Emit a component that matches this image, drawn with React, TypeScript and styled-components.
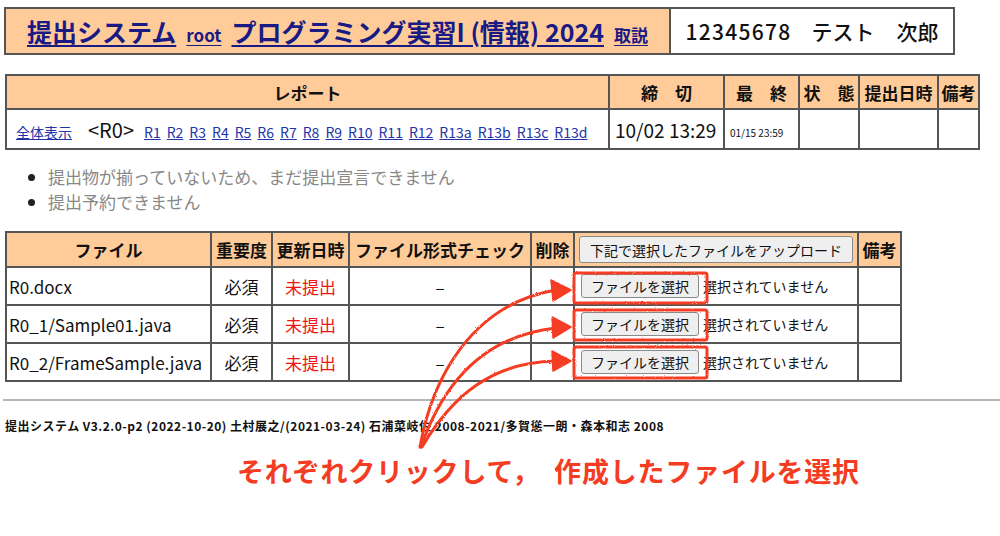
import React from 'react';
import styled, { createGlobalStyle } from 'styled-components';

const GlobalStyle = createGlobalStyle`
  html, body {
    margin: 0;
    padding: 0;
    background: #ffffff;
  }
  body {
    font-family: "Noto Sans CJK JP", "Noto Sans", sans-serif;
    color: #111;
  }
`;

const PEACH = '#ffcc99';
const LINE = '#555555';
const RED = '#f43c22';

const REPORTS = ['R1', 'R2', 'R3', 'R4', 'R5', 'R6', 'R7', 'R8', 'R9', 'R10', 'R11', 'R12', 'R13a', 'R13b', 'R13c', 'R13d'];

const FILES = [
  { name: 'R0.docx' },
  { name: 'R0_1/Sample01.java' },
  { name: 'R0_2/FrameSample.java' },
];

const App: React.FC = () => {
  return (
    <>
      <GlobalStyle />
      <Page>
        <HeaderTable>
          <tbody>
            <tr>
              <TitleCell>
                <TitleRow>
                  <BigLink href="#">提出システム</BigLink>
                  <SmallLink href="#">root</SmallLink>
                  <BigLink href="#">プログラミング実習I (情報) 2024</BigLink>
                  <SmallLink href="#">取説</SmallLink>
                </TitleRow>
              </TitleCell>
              <UserCell>
                <UserId>12345678</UserId>テスト<UserGap />次郎
              </UserCell>
            </tr>
          </tbody>
        </HeaderTable>

        <GridTable>
          <thead>
            <tr>
              <Th $w={603} $h={34}>レポート</Th>
              <Th $w={115} $h={34}>締　切</Th>
              <Th $w={75} $h={34}>最　終</Th>
              <Th $w={60} $h={34}>状　態</Th>
              <Th $w={79} $h={34}>提出日時</Th>
              <Th $w={41} $h={34}>備考</Th>
            </tr>
          </thead>
          <tbody>
            <tr>
              <Td $h={40}>
                <ReportNav>
                  <NavLink href="#">全体表示</NavLink>
                  <Current>&lt;R0&gt;</Current>
                  {REPORTS.map((r) => (
                    <NavLink key={r} href="#">{r}</NavLink>
                  ))}
                </ReportNav>
              </Td>
              <Td $h={40}><Deadline>10/02 13:29</Deadline></Td>
              <Td $h={40}><FinalDate>01/15 23:59</FinalDate></Td>
              <Td $h={40} />
              <Td $h={40} />
              <Td $h={40} />
            </tr>
          </tbody>
        </GridTable>

        <Notes>
          <li>提出物が揃っていないため、まだ提出宣言できません</li>
          <li>提出予約できません</li>
        </Notes>

        <GridTable>
          <thead>
            <tr>
              <Th $w={205} $h={35}>ファイル</Th>
              <Th $w={61} $h={35}>重要度</Th>
              <Th $w={77} $h={35}>更新日時</Th>
              <Th $w={182} $h={35}>ファイル形式チェック</Th>
              <Th $w={43} $h={35}>削除</Th>
              <Th $w={284} $h={35}>
                <UploadButton type="button">下記で選択したファイルをアップロード</UploadButton>
              </Th>
              <Th $w={43} $h={35}>備考</Th>
            </tr>
          </thead>
          <tbody>
            {FILES.map((f) => (
              <tr key={f.name}>
                <Td $h={38}>{f.name}</Td>
                <Td $h={38} $center>必須</Td>
                <Td $h={38} $center><Missing>未提出</Missing></Td>
                <Td $h={38} $center>–</Td>
                <Td $h={38} />
                <Td $h={38}>
                  <FilePicker>
                    <PickButton type="button">ファイルを選択</PickButton>
                    <PickStatus>選択されていません</PickStatus>
                  </FilePicker>
                </Td>
                <Td $h={38} />
              </tr>
            ))}
          </tbody>
        </GridTable>

        <Rule />
        <Footer>
          提出システム V3.2.0-p2 (2022-10-20) 土村展之/(2021-03-24) 石浦菜岐佐 2008-2021/多賀慫一朗・森本和志 2008
        </Footer>
        <Annotation>それぞれクリックして，<AnnotationGap />作成したファイルを選択</Annotation>

        <Overlay width="1000" height="536" viewBox="0 0 1000 536">
          <defs>
            <filter id="rough" x="-5%" y="-5%" width="110%" height="110%">
              <feTurbulence type="fractalNoise" baseFrequency="0.9" numOctaves="2" result="n" />
              <feDisplacementMap in="SourceGraphic" in2="n" scale="2.2" />
            </filter>
          </defs>
          <g filter="url(#rough)" stroke={RED} fill="none" strokeWidth={3} strokeLinecap="round">
            <rect x={574} y={273} width={133} height={30} rx={2} />
            <rect x={574} y={310} width={133} height={30} rx={2} />
            <rect x={574} y={347} width={133} height={31} rx={2} />
            <path d="M420 447 C 432 378, 472 304, 556 290" />
            <path d="M421 447 C 442 386, 482 336, 556 328" />
            <path d="M422 447 C 452 396, 492 362, 556 361" />
          </g>
          <g filter="url(#rough)" fill={RED} stroke={RED} strokeWidth={1.5} strokeLinejoin="round">
            <polygon points="571,290 551,280 553,301" />
            <polygon points="571,327 552,317 553,338" />
            <polygon points="571,361 552,351 553,371" />
          </g>
        </Overlay>
      </Page>
    </>
  );
};

const Page = styled.div`
  position: relative;
  width: 1000px;
  height: 536px;
  padding: 7px 0 0 4px;
  box-sizing: border-box;
  overflow: hidden;
`;

const HeaderTable = styled.table`
  border-collapse: collapse;
  border: 2px solid ${LINE};
  margin-bottom: 19px;
`;

const TitleCell = styled.td`
  width: 663px;
  height: 44px;
  padding: 0;
  background: ${PEACH};
  border: 2px solid ${LINE};
`;

const TitleRow = styled.div`
  display: flex;
  align-items: baseline;
  justify-content: center;
  gap: 10px;
`;

const BigLink = styled.a`
  font-size: 25px;
  font-weight: 700;
  color: #1a1a85;
  text-decoration: underline;
  text-underline-offset: 3px;
`;

const SmallLink = styled.a`
  font-size: 17px;
  font-weight: 700;
  color: #1a1a85;
  text-decoration: underline;
  text-underline-offset: 3px;
`;

const UserCell = styled.td`
  width: 282px;
  padding: 0;
  text-align: center;
  font-size: 21px;
  font-weight: 500;
  color: #111;
  border: 2px solid ${LINE};
  white-space: nowrap;
`;

const UserId = styled.span`
  letter-spacing: 1.3px;
  margin-right: 20px;
`;

const UserGap = styled.span`
  display: inline-block;
  width: 22px;
`;

const GridTable = styled.table`
  border-collapse: collapse;
  border: 2px solid ${LINE};
  margin-left: 1px;
  font-size: 17px;
`;

const Th = styled.th<{ $w: number; $h: number }>`
  width: ${(p) => p.$w}px;
  height: ${(p) => p.$h}px;
  padding: 0 2px;
  box-sizing: border-box;
  background: ${PEACH};
  border: 2px solid ${LINE};
  font-weight: 700;
  white-space: nowrap;
  text-align: center;
`;

const Td = styled.td<{ $h: number; $center?: boolean }>`
  height: ${(p) => p.$h}px;
  padding: 0 2px;
  box-sizing: border-box;
  border: 2px solid ${LINE};
  white-space: nowrap;
  text-align: ${(p) => (p.$center ? 'center' : 'left')};
`;

const ReportNav = styled.div`
  display: flex;
  align-items: baseline;
  gap: 6px;
  padding-left: 7px;
`;

const NavLink = styled.a`
  font-size: 14px;
  color: #2233aa;
  text-decoration: underline;
`;

const Current = styled.span`
  font-size: 20px;
  margin: 0 4px 0 10px;
`;

const Deadline = styled.span`
  font-size: 19px;
  padding-left: 3px;
`;

const FinalDate = styled.span`
  font-size: 10px;
  padding-left: 3px;
`;

const Notes = styled.ul`
  margin: 14px 0 17px 0;
  padding-left: 44px;
  color: #888;
  font-size: 17px;
  line-height: 25px;

  li::marker {
    color: #222;
  }
`;

const UploadButton = styled.button`
  width: 274px;
  height: 27px;
  padding: 0;
  font-family: inherit;
  font-size: 14px;
  font-weight: 400;
  color: #111;
  background: #efefef;
  border: 1px solid #8a8a8a;
  border-radius: 3px;
`;

const Missing = styled.span`
  color: #ee1414;
`;

const FilePicker = styled.div`
  display: flex;
  align-items: center;
  gap: 4px;
  padding-left: 4px;
`;

const PickButton = styled.button`
  width: 118px;
  height: 24px;
  padding: 0;
  font-family: inherit;
  font-size: 14px;
  color: #111;
  background: #efefef;
  border: 1px solid #8a8a8a;
  border-radius: 3px;
`;

const PickStatus = styled.span`
  font-size: 14px;
`;

const Rule = styled.hr`
  margin: 17px 0 0 -1px;
  border: none;
  border-top: 2px solid #b5b5b5;
`;

const Footer = styled.p`
  margin: 17px 0 0 1px;
  font-size: 12px;
  letter-spacing: 0.5px;
  line-height: 16px;
  font-weight: 700;
  color: #111;
  white-space: nowrap;
`;

const Annotation = styled.p`
  margin: 19px 0 0 233px;
  font-size: 27px;
  line-height: 36px;
  font-weight: 700;
  letter-spacing: 0.8px;
  color: ${RED};
  white-space: nowrap;
`;

const AnnotationGap = styled.span`
  display: inline-block;
  width: 14px;
`;

const Overlay = styled.svg`
  position: absolute;
  left: 0;
  top: 0;
  pointer-events: none;
`;

export default App;
